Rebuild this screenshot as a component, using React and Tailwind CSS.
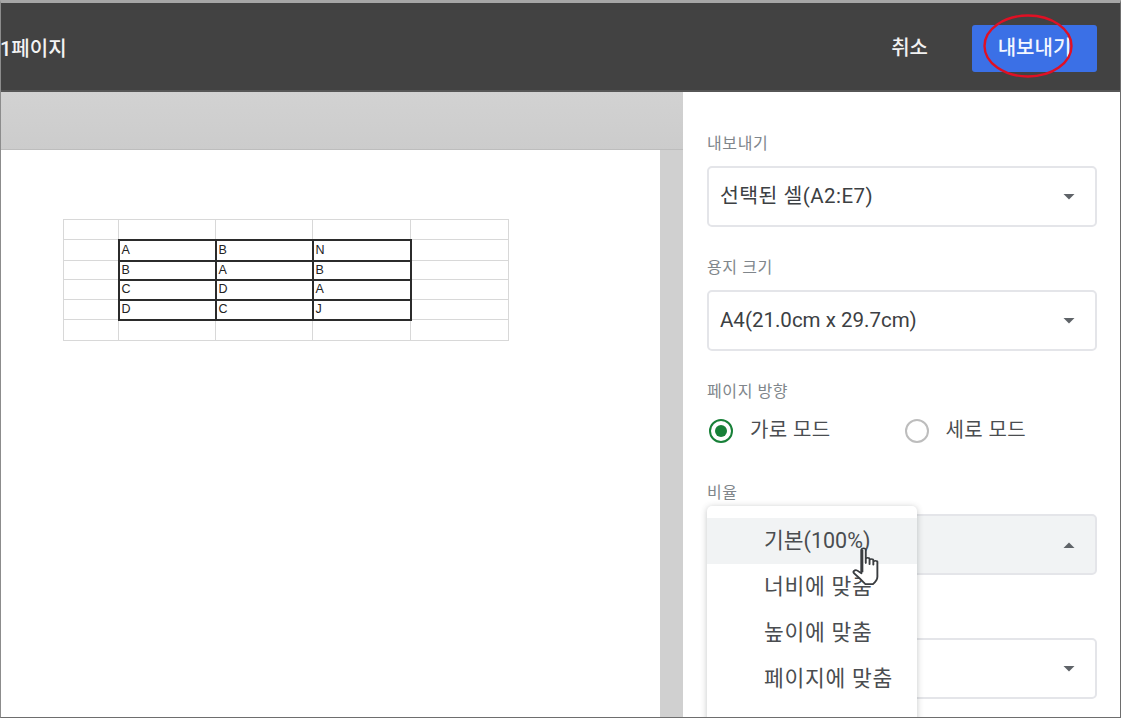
const font = { fontFamily: '"Roboto","Noto Sans CJK KR",sans-serif' };

function Caret({ up }) {
  return (
    <svg width="12" height="6" viewBox="0 0 12 6" className="block">
      <path d={up ? "M0.5 6 L6 0.5 L11.5 6 Z" : "M0.5 0 L6 5.5 L11.5 0 Z"} fill="#5f6368" />
    </svg>
  );
}

function Select({ children, active, className = "" }) {
  return (
    <div
      className={`flex h-[61px] items-center justify-between rounded-[5px] border-2 border-[#e4e5e9] pl-[11px] pr-[20px] text-[20.5px] text-[#3c4043] ${active ? "bg-[#f1f3f4]" : "bg-white"} ${className}`}
    >
      <span>{children}</span>
      <Caret up={active} />
    </div>
  );
}

function Label({ children, className = "" }) {
  return <div className={`h-[20px] pt-[1px] text-[16px] leading-[20px] tracking-[0.6px] text-[#80868b] ${className}`}>{children}</div>;
}

function Sheet() {
  const rows = [
    ["A", "B", "N"],
    ["B", "A", "B"],
    ["C", "D", "A"],
    ["D", "C", "J"],
  ];
  const rowH = ["h-[20px]", "h-[21px]", "h-[19px]", "h-[20px]", "h-[20px]", "h-[21px]"];
  const widths = ["w-[55px]", "w-[97px]", "w-[97px]", "w-[98px]", "w-[98px]"];
  const all = [["", "", ""], ...rows, ["", "", ""]];
  return (
    <table
      className="ml-[62px] mt-[69px] border-collapse text-[12.5px] leading-none text-[#222]"
      style={{ fontFamily: '"Liberation Sans",sans-serif' }}
    >
      <colgroup>
        {widths.map((w, i) => (
          <col key={i} className={w} />
        ))}
      </colgroup>
      <tbody>
        {all.map((r, y) => {
          const inner = y >= 1 && y <= 4;
          return (
            <tr key={y} className={rowH[y]}>
              <td className="border-[1px] border-[#d8d8d8] p-0" />
              {r.map((c, x) => (
                <td
                  key={x}
                  className={`p-0 pl-[2px] align-middle ${inner ? "border-[2px] border-[#2b2b2b]" : "border-[1px] border-[#d8d8d8]"}`}
                >
                  {c}
                </td>
              ))}
              <td className="border-[1px] border-[#d8d8d8] p-0" />
            </tr>
          );
        })}
      </tbody>
    </table>
  );
}

function Radio({ on, label, className = "" }) {
  return (
    <div className={`flex items-center ${className}`}>
      <span
        className={`flex h-[24px] w-[24px] items-center justify-center rounded-full border-[2.5px] ${on ? "border-[#188038]" : "border-[#bdbdbd]"}`}
      >
        {on && <span className="h-[12px] w-[12px] rounded-full bg-[#188038]" />}
      </span>
      <span className="ml-[17px] -mt-[3px] text-[20px] tracking-[0.4px] text-[#4a4d50]">{label}</span>
    </div>
  );
}

function Hand() {
  return (
    <svg
      width="27"
      height="41"
      viewBox="0 0 20 36"
      preserveAspectRatio="none"
      className="absolute left-[145px] top-[28px]"
    >
      <path
        d="M7 3.5 C7 1.5 10.2 1.5 10.2 3.5 L10.2 15 L10.2 11.5 C10.2 10 13 10 13 11.5 L13 16 L13 12.5 C13 11 15.8 11 15.8 12.5 L15.8 16.5 L15.8 14 C15.8 12.6 18.8 12.6 18.8 14 L18.8 27 C18.8 30 17 32 15.5 33.5 L10 33.5 C8 31 4.5 27 1.6 24 C0.3 22.6 2 20.4 4 21.6 L7 24 Z"
        fill="#fff"
        stroke="#3a3d40"
        strokeWidth="1.4"
        strokeLinejoin="round"
      />
      <path d="M7.4 3 L7.4 23" stroke="#3a3d40" strokeWidth="2" />
    </svg>
  );
}

export default function App() {
  const items = ["기본(100%)", "너비에 맞춤", "높이에 맞춤", "페이지에 맞춤"];
  return (
    <div
      className="relative h-[719px] w-[1122px] overflow-hidden bg-white pb-[1px] pr-[1px]"
      style={font}
    >
      <div className="flex h-[718px] flex-col overflow-hidden border-l border-t-[3px] border-b border-r border-l-[#8c8c8c] border-t-[#a6a6a6] border-b-[#6e6e6e] border-r-[#6e6e6e]">
        <header className="flex h-[89px] shrink-0 items-center justify-between border-b-2 border-[#565656] bg-[#424242] pl-0 pr-[23px] text-white">
          <span className="mt-[4px] ml-[-1px] text-[20px] font-medium text-[#f3f3f3]">1페이지</span>
          <div className="mt-[3px] flex items-center">
            <span className="text-[20px] font-medium text-[#f1f1f1]">취소</span>
            <button className="ml-[44px] flex h-[47px] w-[125px] items-center justify-center rounded-[3px] bg-[#3b70e6] text-[20px] font-medium text-[#f4f7ff]">
              내보내기
            </button>
          </div>
        </header>

        <div className="flex min-h-0 flex-1">
          <section className="flex w-[682px] shrink-0 flex-col bg-[#d0d0d0]">
            <div className="h-[58px] shrink-0 border-b border-[#bdbdbd] bg-gradient-to-b from-[#d2d2d2] to-[#cccccc]" />
            <div className="mr-[23px] flex-1 bg-white">
              <Sheet />
            </div>
          </section>

          <aside className="relative flex-1 bg-white pl-[24px] pr-[23px] pt-[41px]">
            <Label>내보내기</Label>
            <Select className="mt-[13px] tracking-[0.45px]">선택된 셀(A2:E7)</Select>
            <Label className="mt-[30px]">용지 크기</Label>
            <Select className="mt-[13px]">A4(21.0cm x 29.7cm)</Select>
            <Label className="mt-[30px]">페이지 방향</Label>
            <div className="mt-[16px] flex h-[28px] items-center">
              <Radio on label="가로 모드" className="ml-[2px]" />
              <Radio label="세로 모드" className="ml-[74px]" />
            </div>
            <Label className="mt-[37px]">비율</Label>
            <Select active className="mt-[12px]"> </Select>
            <Select className="mt-[63px]"> </Select>

            <div className="absolute left-[24px] top-[414px] h-[220px] w-[210px] rounded-t-[5px] bg-white pt-[12px] shadow-[0_1px_6px_rgba(60,64,67,0.3)]">
              <div className="relative">
                {items.map((t, i) => (
                  <div
                    key={t}
                    className={`flex h-[46px] items-center pl-[57px] text-[21.5px] text-[#4a4d50] ${i === 0 ? "bg-[#f1f3f4]" : "tracking-[0.7px]"}`}
                  >
                    <span>{t}</span>
                  </div>
                ))}
                <div className="ml-[52px] mt-[15px] h-[1px] w-[90px] bg-[#dadce0]" />
                <Hand />
              </div>
            </div>
          </aside>
        </div>
      </div>

      <svg
        width="96"
        height="70"
        viewBox="0 0 96 70"
        className="pointer-events-none absolute left-[980px] top-[11px]"
      >
        <ellipse cx="48" cy="35" rx="43.5" ry="30.5" fill="none" stroke="#e01024" strokeWidth="2.4" />
      </svg>
    </div>
  );
}
